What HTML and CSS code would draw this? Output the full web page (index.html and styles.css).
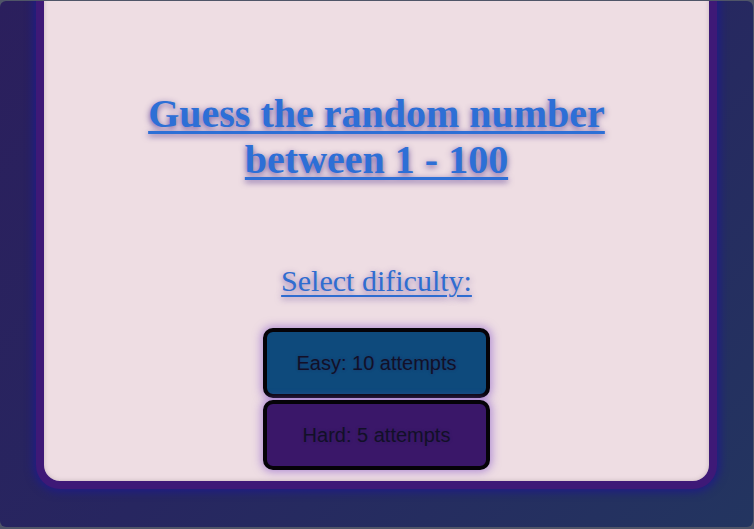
FILE: index.html
```html
<!DOCTYPE html>
<html lang="en">
<head>
<meta charset="utf-8">
<title>Guess the number</title>
<link rel="stylesheet" href="styles.css">
</head>
<body>
<div class="frame">
  <main class="card">
    <h1 class="title">Guess the random number<br>between 1 - 100</h1>
    <h2 class="subtitle">Select dificulty:</h2>
    <div class="levels">
      <button class="level level-easy">Easy: 10 attempts</button>
      <button class="level level-hard">Hard: 5 attempts</button>
    </div>
  </main>
</div>
</body>
</html>
```

FILE: styles.css
```css
html, body {
  margin: 0;
  padding: 0;
}
body {
  background: #4f5568;
  height: 529px;
  overflow: hidden;
}
.frame {
  box-sizing: border-box;
  height: 526px;
  margin: 1px 1px 2px 0;
  padding: 0 36px;
  border-radius: 6px;
  background: linear-gradient(135deg, #2b1f5d 0%, #272660 50%, #233560 100%);
  overflow: hidden;
}
.card {
  box-sizing: border-box;
  height: 519px;
  margin-top: -31px;
  border: 8px solid #3e1977;
  border-radius: 0 0 24px 24px;
  background: #eedde3;
  box-shadow: 0 0 8px 3px #1f1d84, inset 0 0 4px rgba(120, 100, 110, 0.35);
  display: flex;
  flex-direction: column;
  align-items: center;
  padding-top: 113px;
}
.title {
  margin: 0;
  font-family: "Liberation Serif", "Times New Roman", serif;
  font-weight: 700;
  font-size: 40px;
  line-height: 46px;
  text-align: center;
  color: #2d6fd6;
  text-decoration: underline;
  text-decoration-thickness: 3px;
  text-underline-offset: 4px;
  text-shadow: 0 2px 6px rgba(80, 50, 140, 0.85);
}
.subtitle {
  margin: 81px 0 0;
  font-family: "Liberation Serif", "Times New Roman", serif;
  font-weight: 400;
  font-size: 30px;
  line-height: 34px;
  color: #2f6dd0;
  text-decoration: underline;
  text-decoration-thickness: 2px;
  text-underline-offset: 4px;
  text-shadow: 0 2px 6px rgba(90, 60, 150, 0.7);
}
.levels {
  margin-top: 30px;
  display: flex;
  flex-direction: column;
  gap: 2px;
}
.level {
  box-sizing: border-box;
  width: 227px;
  height: 70px;
  border: 4px solid #050308;
  border-radius: 10px;
  font-family: "Liberation Sans", Arial, sans-serif;
  font-size: 20px;
  color: #121028;
  text-shadow: 0 0 3px rgba(40, 30, 80, 0.4);
  box-shadow: 0 0 8px 2px rgba(130, 80, 200, 0.55);
  padding: 0;
  cursor: pointer;
}
.level-easy {
  background: #0e4a7c;
}
.level-hard {
  background: #3a1769;
}
```
